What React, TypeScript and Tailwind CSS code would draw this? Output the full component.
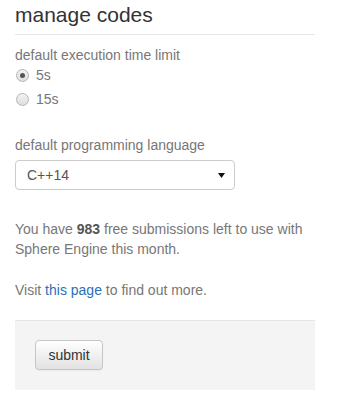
import React from "react";

function Radio({ checked, label, className }: { checked?: boolean; label: string; className?: string }) {
  return (
    <div className={"flex items-center h-[24px] " + (className ?? "")}>
      <span className="w-[13px] h-[13px] rounded-full border border-[#b5b5b5] bg-gradient-to-b from-[#f3f3f3] to-[#dedede] flex items-center justify-center ml-[1px]">
        {checked && <span className="w-[5px] h-[5px] rounded-full bg-[#555]" />}
      </span>
      <span className="ml-[7px] text-[#777]">{label}</span>
    </div>
  );
}

export default function App() {
  return (
    <div
      className="w-[348px] h-[398px] bg-white text-[14px] leading-[20px] text-[#777]"
      style={{ fontFamily: '"Liberation Sans", Arial, sans-serif' }}
    >
      <div className="ml-[15px] w-[300px]">
        <h1 className="text-[21px] leading-[24px] text-[#333] pt-[3px] pb-[7px] border-b border-[#e5e5e5]">
          manage codes
        </h1>
        <div className="mt-[10px] text-[#777]">default execution time limit</div>
        <Radio checked label="5s" className="mt-[-2px]" />
        <Radio label="15s" />
        <div className="mt-[24px] text-[#777]">default programming language</div>
        <div className="mt-[5px] w-[220px] h-[30px] border border-[#ccc] rounded-[4px] flex items-center justify-between pl-[11px] pr-[9px] text-[#555]">
          <span>C++14</span>
          <svg width="7" height="5" viewBox="0 0 7 5">
            <path d="M0 0 H7 L3.5 5 Z" fill="#111" />
          </svg>
        </div>
        <p className="mt-[29px]">
          You have <b className="text-[#555]">983</b> free submissions left to use with Sphere Engine this month.
        </p>
        <p className="mt-[21px]">
          Visit <a className="text-[#2a6fb7]">this page</a> to find out more.
        </p>
        <div className="mt-[20px] h-[70px] bg-[#f4f4f4] border-t border-[#e5e5e5] pt-[19px] pl-[20px]">
          <button className="w-[68px] h-[30px] border border-[#c6c6c6] rounded-[4px] bg-gradient-to-b from-white to-[#e2e2e2] text-[#333] text-[14px] shadow-[0_1px_1px_rgba(0,0,0,0.05)]">
            submit
          </button>
        </div>
      </div>
    </div>
  );
}
